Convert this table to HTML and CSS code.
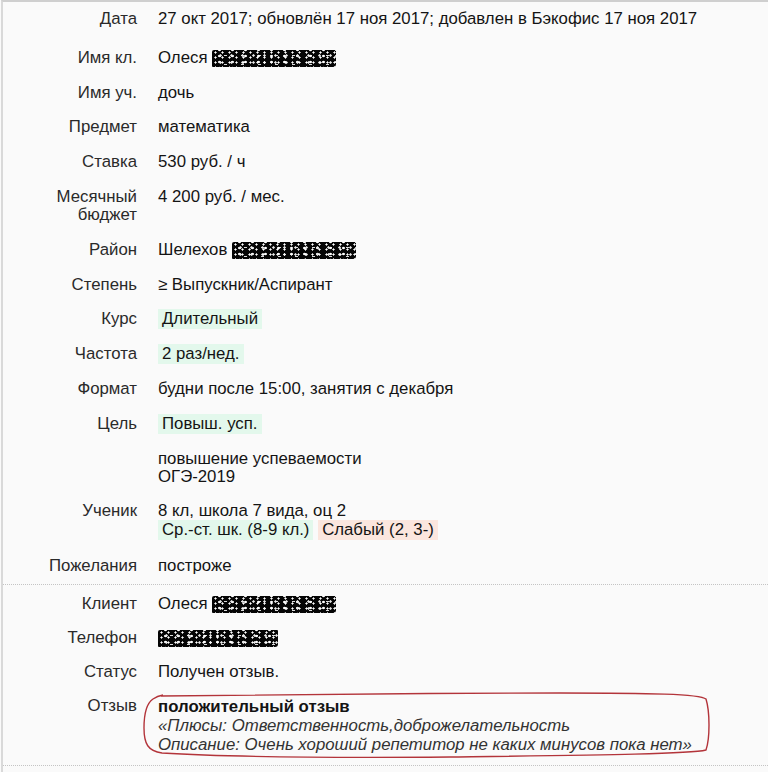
FILE: index.html
```html
<!DOCTYPE html>
<html lang="ru">
<head>
<meta charset="utf-8">
<title>Заявка</title>
<link rel="stylesheet" href="styles.css">
</head>
<body>
<div class="panel">
  <div class="section">
    <div class="label row-first">Дата</div>
    <div class="value row-first">27 окт 2017; обновлён 17 ноя 2017; добавлен в Бэкофис 17 ноя 2017</div>

    <div class="label">Имя кл.</div>
    <div class="value">Олеся <span class="redact"></span></div>

    <div class="label">Имя уч.</div>
    <div class="value">дочь</div>

    <div class="label">Предмет</div>
    <div class="value">математика</div>

    <div class="label">Ставка</div>
    <div class="value">530 руб. / ч</div>

    <div class="label">Месячный бюджет</div>
    <div class="value">4 200 руб. / мес.</div>

    <div class="label">Район</div>
    <div class="value">Шелехов <span class="redact"></span></div>

    <div class="label">Степень</div>
    <div class="value">≥ Выпускник/Аспирант</div>

    <div class="label">Курс</div>
    <div class="value"><span class="tag tag-green">Длительный</span></div>

    <div class="label">Частота</div>
    <div class="value"><span class="tag tag-green">2 раз/нед.</span></div>

    <div class="label">Формат</div>
    <div class="value">будни после 15:00, занятия с декабря</div>

    <div class="label">Цель</div>
    <div class="value"><span class="tag tag-green">Повыш. усп.</span></div>

    <div class="label"></div>
    <div class="value">повышение успеваемости<br>ОГЭ-2019</div>

    <div class="label">Ученик</div>
    <div class="value">8 кл, школа 7 вида, оц 2<br><span class="tag tag-green tag-second">Ср.-ст. шк. (8-9 кл.)</span> <span class="tag tag-red tag-second">Слабый (2, 3-)</span></div>

    <div class="label">Пожелания</div>
    <div class="value">построже</div>
  </div>

  <div class="section section-second">
    <div class="label">Клиент</div>
    <div class="value">Олеся <span class="redact"></span></div>

    <div class="label">Телефон</div>
    <div class="value"><span class="redact redact-phone"></span></div>

    <div class="label">Статус</div>
    <div class="value">Получен отзыв.</div>

    <div class="label">Отзыв</div>
    <div class="value review">
      <b class="review-title">положительный отзыв</b><br>
      <i class="review-text">«Плюсы: Ответственность,доброжелательность<br>Описание: Очень хороший репетитор не каких минусов пока нет»</i>
      <svg class="circle" viewBox="142 694 572 68" width="572" height="68" aria-hidden="true">
        <path d="M161 698 C 230 697, 420 695, 560 695 C 650 695, 700 696, 706 701 C 710 714, 710 740, 706 752 C 690 756, 600 757, 450 759 C 320 760, 210 758, 162 755 C 148 753, 144 746, 144 730 C 144 713, 147 705, 153 701 C 156 699, 158 698, 163 697" fill="none" stroke="#b3343a" stroke-width="1.4"/>
      </svg>
    </div>
  </div>
</div>
</body>
</html>
```

FILE: styles.css
```css
* { box-sizing: border-box; }

html, body {
  margin: 0;
  padding: 0;
  background: #fafafa;
}

body {
  font-family: "Liberation Sans", Arial, sans-serif;
  font-size: 16.8px;
  line-height: 18px;
  color: #141414;
}

.panel {
  min-height: 772px;
  margin-left: 1px;
  border-left: 2px solid #d9d9d9;
  border-top: 2px solid #cfcfcf;
  background: #fafafa;
}

.section {
  display: grid;
  grid-template-columns: 100px 1fr;
  column-gap: 21px;
  row-gap: 16.8px;
  padding: 8px 0 8.5px 34px;
  border-bottom: 1px dotted #c4c4c4;
}

.section-second {
  row-gap: 16px;
  padding-top: 10px;
  padding-bottom: 11.5px;
}

.label {
  text-align: right;
  color: #2a2a2a;
}

.row-first {
  padding-bottom: 4px;
}

.value {
  color: #141414;
}

.tag {
  display: inline-block;
  padding: 1px 4px;
  margin: -1px 0;
  line-height: 18px;
}

.tag-second {
  margin: 0;
}

.tag-green { background: #e3f8ec; }
.tag-red { background: #fbe6de; }

.redact {
  display: inline-block;
  width: 124px;
  height: 17px;
  vertical-align: -4px;
  background:
    radial-gradient(circle, #fff 0.8px, transparent 1.4px) 0 0 / 7px 5px,
    radial-gradient(circle, #e8e8e8 0.9px, transparent 1.5px) 3px 2px / 11px 7px,
    radial-gradient(circle, #fff 1px, transparent 1.6px) 1px 3px / 13px 6px,
    radial-gradient(ellipse 2px 1px, #ddd 60%, transparent 100%) 5px 1px / 17px 9px,
    #050505;
  border-radius: 2px 1px 3px 1px;
}

.redact-phone {
  width: 120px;
}

.review {
  position: relative;
  line-height: 19px;
}

.review-title {
  font-weight: bold;
}

.review-text {
  font-style: italic;
  color: #333;
}

.circle {
  position: absolute;
  left: -16px;
  top: -5px;
  pointer-events: none;
}
```
